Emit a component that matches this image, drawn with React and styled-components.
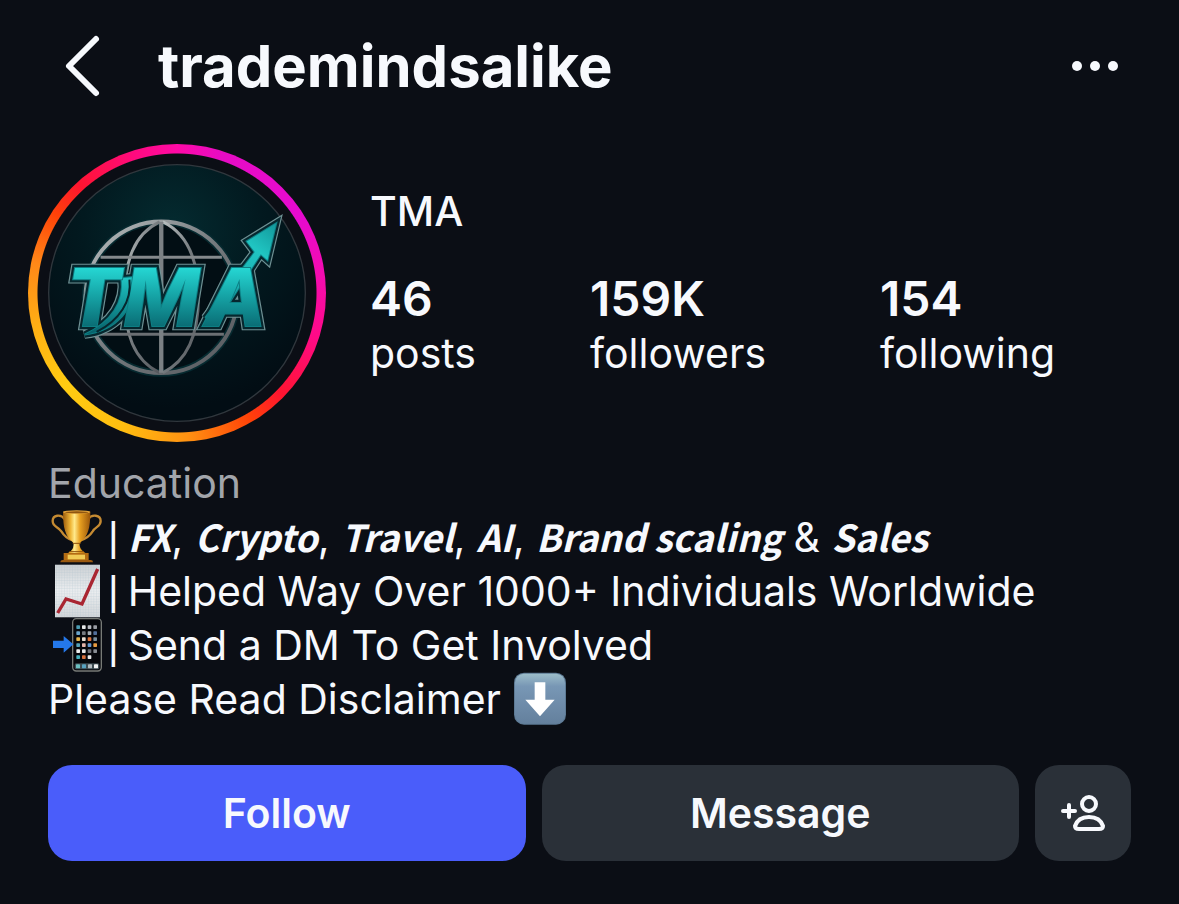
import React from "react";
import styled, { createGlobalStyle } from "styled-components";

const Global = createGlobalStyle`
  * { box-sizing: border-box; }
  body {
    margin: 0;
    background: #0b0e15;
    color: #f7f9fd;
    font-family: Inter, "Liberation Sans", sans-serif;
  }
`;

const Page = styled.div`
  min-height: 100vh;
  padding-bottom: 43px;
`;

const Header = styled.header`
  display: flex;
  align-items: center;
  height: 132px;
  padding: 0 56px 0 60px;
`;

const IconButton = styled.button`
  display: flex;
  padding: 0;
  border: 0;
  background: none;
  color: inherit;
  cursor: pointer;
`;

const Username = styled.h1`
  flex: 1;
  margin: 0 0 0 52px;
  font-size: 58px;
  line-height: 72px;
  font-weight: 700;
`;

const Profile = styled.section`
  display: flex;
  align-items: center;
  gap: 44px;
  padding: 12px 28px 0;
`;

const StoryRing = styled.button`
  display: grid;
  place-items: center;
  flex: none;
  width: 298px;
  height: 298px;
  padding: 0;
  border: 0;
  border-radius: 50%;
  cursor: pointer;
  background:
    radial-gradient(circle closest-side, #0b0e15 139px, transparent 140px),
    conic-gradient(
      #ff0aa6 0deg, #e60cc4 18deg, #e60ad0 58deg, #f50cae 84deg,
      #ff0a86 108deg, #ff1430 134deg, #ff4208 150deg, #ff9212 176deg,
      #ffbe10 202deg, #ffcc12 230deg, #ffb014 256deg, #ff8818 282deg,
      #ff4208 303deg, #ff1430 318deg, #ff0a7c 342deg, #ff0aa6 360deg
    );
`;

const Details = styled.div`
  flex: 1;
  padding-bottom: 22px;
`;

const DisplayName = styled.h2`
  margin: 0 0 34px;
  font-size: 41px;
  line-height: 54px;
  font-weight: 500;
`;

const Stats = styled.ul`
  display: flex;
  gap: 114px;
  margin: 0;
  padding: 0;
  list-style: none;
`;

const StatLink = styled.a`
  display: block;
  color: inherit;
  text-decoration: none;
  font-size: 41px;
  line-height: 54px;
`;

const StatValue = styled.strong`
  display: block;
  font-size: 48px;
  font-weight: 600;
`;

const Bio = styled.section`
  padding: 14px 48px 0;
  font-size: 41px;
  line-height: 54px;
`;

const BioLine = styled.p`
  display: flex;
  align-items: center;
  gap: ${(p) => p.$gap || 0}px;
  margin: 0;
  color: ${(p) => (p.$muted ? "#a2a5ab" : "inherit")};
`;

const Divider = styled.span`
  margin-right: 3px;
  font-family: "Liberation Sans", sans-serif;
`;

const Fancy = styled.em`
  font-family: "Noto Sans CJK SC", sans-serif;
  font-size: 37px;
  font-style: italic;
  font-weight: 700;
  line-height: 1;
`;

const Emoji = styled.svg`
  flex: none;
  width: 54px;
  height: 54px;
`;

const Actions = styled.div`
  display: flex;
  gap: 16px;
  padding: 39px 48px 0;
`;

const ActionButton = styled.button`
  display: flex;
  align-items: center;
  justify-content: center;
  flex: ${(p) => (p.$square ? "none" : "1")};
  width: ${(p) => (p.$square ? "96px" : "auto")};
  height: 96px;
  padding: 0;
  border: 0;
  border-radius: 24px;
  background: ${(p) => (p.$primary ? "#4a5dfa" : "#2a3038")};
  color: inherit;
  font: 600 41px/54px Inter, "Liberation Sans", sans-serif;
  cursor: pointer;
`;

const bladePath = "M306 430C316 500 276 562 196 598C290 586 352 520 346 426Z";
const arrowPath = "M556 548L704 352L680 320L768 266L742 376L722 358L630 500Z";

function LogoLetters() {
  return (
    <>
      <text x="142" y="572">T</text>
      <text x="314" y="572">M</text>
      <text x="554" y="572">A</text>
    </>
  );
}

function Logo() {
  return (
    <svg width="258" height="258" viewBox="87 89 770 770" role="img" aria-label="TMA profile photo">
      <defs>
        <radialGradient id="bg" cx="0.48" cy="0.25" r="0.7">
          <stop offset="0" stopColor="#042b30" />
          <stop offset="0.5" stopColor="#02191f" />
          <stop offset="1" stopColor="#020d14" />
        </radialGradient>
        <linearGradient id="steel" x1="0" y1="0" x2="1" y2="1">
          <stop offset="0" stopColor="#b9bfc0" />
          <stop offset="0.5" stopColor="#74797d" />
          <stop offset="1" stopColor="#55585d" />
        </linearGradient>
        <linearGradient id="teal" gradientUnits="userSpaceOnUse" x1="0" y1="390" x2="0" y2="590">
          <stop offset="0" stopColor="#27dcd8" />
          <stop offset="0.45" stopColor="#16a5a7" />
          <stop offset="1" stopColor="#08636c" />
        </linearGradient>
        <linearGradient id="tip" gradientUnits="userSpaceOnUse" x1="780" y1="250" x2="540" y2="560">
          <stop offset="0" stopColor="#0f8e92" />
          <stop offset="0.3" stopColor="#20c5c2" />
          <stop offset="1" stopColor="#109198" />
        </linearGradient>
      </defs>
      <circle cx="472" cy="474" r="383" fill="url(#bg)" stroke="#30373d" strokeWidth="4" />
      <circle cx="425" cy="487" r="226" fill="#020e14" stroke="#062a30" strokeWidth="22" />
      <g fill="none" stroke="url(#steel)" strokeWidth="9">
        <circle cx="425" cy="487" r="226" strokeWidth="12" />
        <path d="M420 262C342 300 316 380 316 487S342 674 420 712" />
        <path d="M430 262C508 300 536 380 536 487S508 674 430 712" />
        <path d="M244 367H606" stroke="#85898c" />
        <path d="M236 597H612" stroke="#6b6f73" />
      </g>
      <path d="M425 262V712" stroke="#7b8084" strokeWidth="13" />
      <g
        fontFamily="Inter, sans-serif"
        fontWeight="800"
        fontStyle="italic"
        fontSize="238"
        strokeLinejoin="miter"
        paintOrder="stroke"
      >
        <g fill="#6f9194" stroke="#6f9194" strokeWidth="26">
          <path d={bladePath} />
          <path d={arrowPath} />
          <LogoLetters />
        </g>
        <g fill="#06272e" stroke="#06272e" strokeWidth="19">
          <path d={bladePath} />
          <path d={arrowPath} />
          <LogoLetters />
        </g>
        <g fill="url(#teal)" stroke="#0d7f84" strokeWidth="6">
          <path d={bladePath} />
          <path d={arrowPath} fill="url(#tip)" />
          <LogoLetters />
        </g>
      </g>
      <path d="M330 434C338 498 300 556 232 590" fill="none" stroke="#06272e" strokeWidth="6" />
    </svg>
  );
}

function Trophy() {
  return (
    <Emoji viewBox="0 0 162 162" role="img" aria-label="trophy">
      <defs>
        <linearGradient id="gold" x1="0" x2="1" y1="0" y2="0">
          <stop offset="0" stopColor="#9c5b0c" />
          <stop offset="0.28" stopColor="#f0b83a" />
          <stop offset="0.42" stopColor="#ffe98a" />
          <stop offset="0.62" stopColor="#e8a020" />
          <stop offset="1" stopColor="#9a560a" />
        </linearGradient>
      </defs>
      <g fill="none" stroke="#c58a32" strokeWidth="7" strokeLinecap="round">
        <path d="M50 27C38 11 14 15 14 33C14 51 30 49 40 64C50 80 60 87 74 91" />
        <path d="M120 27C132 11 158 15 158 33C158 51 142 49 134 64C124 80 110 87 98 91" />
      </g>
      <path d="M45 6H127C127 56 119 78 101 93Q93 101 95 108C97 118 104 125 116 131H56C68 125 76 118 76 108Q79 101 71 93C53 78 45 56 45 6Z" fill="url(#gold)" />
      <ellipse cx="86" cy="6" rx="41" ry="5" fill="#e3a33a" />
      <ellipse cx="86" cy="7" rx="35" ry="3" fill="#8e5510" />
      <path d="M74 100H98M64 125H108" stroke="#8d500b" strokeWidth="3" />
      <path d="M47 129H122V152H47Z" fill="#b36c13" />
      <path d="M59 134H111V148H59Z" fill="#f1cb55" />
      <path d="M37 157Q37 150 44 150H128Q135 150 135 157Z" fill="#9b5a10" />
    </Emoji>
  );
}

function ChartUp() {
  return (
    <Emoji viewBox="0 0 162 162" role="img" aria-label="chart increasing">
      <defs>
        <linearGradient id="paper" x1="0" y1="0" x2="0" y2="1">
          <stop offset="0" stopColor="#ccd0d4" />
          <stop offset="0.5" stopColor="#eceef0" />
          <stop offset="1" stopColor="#d3d6d9" />
        </linearGradient>
        <pattern id="grid" width="8" height="8" patternUnits="userSpaceOnUse">
          <path d="M0 0H8M0 0V8" stroke="#a9bfcb" strokeWidth="2" opacity="0.55" />
        </pattern>
      </defs>
      <path d="M21 2H156V160H21Z" fill="url(#paper)" />
      <path d="M21 2H156V160H21Z" fill="url(#grid)" />
      <path d="M29 147L54 105L102 120L149 15" fill="none" stroke="#a92632" strokeWidth="10" />
    </Emoji>
  );
}

const appColors = [
  "#4b9bb0", "#e8e8e8", "#b8bac0", "#9a9ca2",
  "#6aa5cc", "#777a80", "#a6adb4", "#526f9a",
  "#e8b54a", "#e9ddd0", "#e0743c", "#7a8e9c",
  "#56a2b8", "#e4b4a8", "#669ad2", "#e79b40",
  "#eeeeee", "#e8e8e8", "#707278", "#888c92",
  "#46b0bc", "#d8703c", "#e9e9e9", "#08090d",
];

function PhoneArrow() {
  return (
    <Emoji viewBox="0 0 162 162" role="img" aria-label="mobile phone with arrow">
      <rect x="74" y="2" width="86" height="157" rx="11" fill="#06070b" stroke="#777a76" strokeWidth="4" />
      {appColors.map((color, i) => (
        <rect key={i} x={85 + (i % 4) * 17} y={22 + Math.floor(i / 4) * 18} width="11" height="11" rx="2" fill={color} />
      ))}
      <rect x="80" y="136" width="74" height="18" rx="5" fill="#3c4a50" />
      {["#6cc0c0", "#58a2c0", "#b0b8bc", "#f2f2f2"].map((color, i) => (
        <rect key={color} x={84 + i * 18} y="139" width="12" height="12" rx="2" fill={color} />
      ))}
      <path d="M15 68H47V54L76 79L47 104V90H15Z" fill="#2478ea" />
    </Emoji>
  );
}

function DownArrow() {
  return (
    <Emoji viewBox="0 0 162 162" role="img" aria-label="down arrow">
      <defs>
        <linearGradient id="tile" x1="0" y1="0" x2="0" y2="1">
          <stop offset="0" stopColor="#9dbdc9" />
          <stop offset="0.25" stopColor="#7897b5" />
          <stop offset="1" stopColor="#64809d" />
        </linearGradient>
      </defs>
      <rect x="3" y="2" width="156" height="156" rx="30" fill="#5d7a94" />
      <rect x="6" y="5" width="150" height="150" rx="27" fill="url(#tile)" />
      <path d="M65 31H97V83H125L81 133L37 83H65Z" fill="#fff" />
    </Emoji>
  );
}

const stats = [
  ["46", "posts"],
  ["159K", "followers"],
  ["154", "following"],
];

const topics = [
  ["FX", ", "],
  ["Crypto", ", "],
  ["Travel", ", "],
  ["AI", ", "],
  ["Brand scaling", " & "],
  ["Sales", ""],
];

export default function App() {
  return (
    <Page>
      <Global />
      <Header>
        <IconButton aria-label="Back">
          <svg width="46" height="64" viewBox="0 0 46 64" fill="none" stroke="currentColor" strokeWidth="6" strokeLinecap="round" strokeLinejoin="round">
            <path d="M36 5L9 32L36 59" />
          </svg>
        </IconButton>
        <Username>trademindsalike</Username>
        <IconButton aria-label="More options">
          <svg width="56" height="24" viewBox="0 0 56 24" fill="currentColor">
            <circle cx="10" cy="12" r="5" />
            <circle cx="28" cy="12" r="5" />
            <circle cx="46" cy="12" r="5" />
          </svg>
        </IconButton>
      </Header>
      <main>
        <Profile>
          <StoryRing aria-label="View story">
            <Logo />
          </StoryRing>
          <Details>
            <DisplayName>TMA</DisplayName>
            <Stats>
              {stats.map(([value, label]) => (
                <li key={label}>
                  <StatLink href={`#${label}`}>
                    <StatValue>{value}</StatValue>
                    {label}
                  </StatLink>
                </li>
              ))}
            </Stats>
          </Details>
        </Profile>
        <Bio>
          <BioLine $muted>Education</BioLine>
          <BioLine $gap={6}>
            <Trophy />
            <Divider>|</Divider>
            <span>
              {topics.map(([name, after]) => (
                <React.Fragment key={name}>
                  <Fancy>{name}</Fancy>
                  {after}
                </React.Fragment>
              ))}
            </span>
          </BioLine>
          <BioLine $gap={6}>
            <ChartUp />
            <Divider>|</Divider>
            <span>Helped Way Over 1000+ Individuals Worldwide</span>
          </BioLine>
          <BioLine $gap={6}>
            <PhoneArrow />
            <Divider>|</Divider>
            <span>Send a DM To Get Involved</span>
          </BioLine>
          <BioLine $gap={12}>
            <span>Please Read Disclaimer</span>
            <DownArrow />
          </BioLine>
        </Bio>
        <Actions>
          <ActionButton $primary>Follow</ActionButton>
          <ActionButton>Message</ActionButton>
          <ActionButton $square aria-label="Suggested accounts">
            <svg width="48" height="48" viewBox="0 0 48 48" fill="none" stroke="currentColor" strokeWidth="4" strokeLinecap="round" strokeLinejoin="round">
              <circle cx="30" cy="15" r="7" />
              <path d="M16 37C18 31 23 28 30 28S42 31 44 37Q44 40 40 40H20Q16 40 16 37Z" />
              <path d="M4 22H16M10 16V28" />
            </svg>
          </ActionButton>
        </Actions>
      </main>
    </Page>
  );
}
